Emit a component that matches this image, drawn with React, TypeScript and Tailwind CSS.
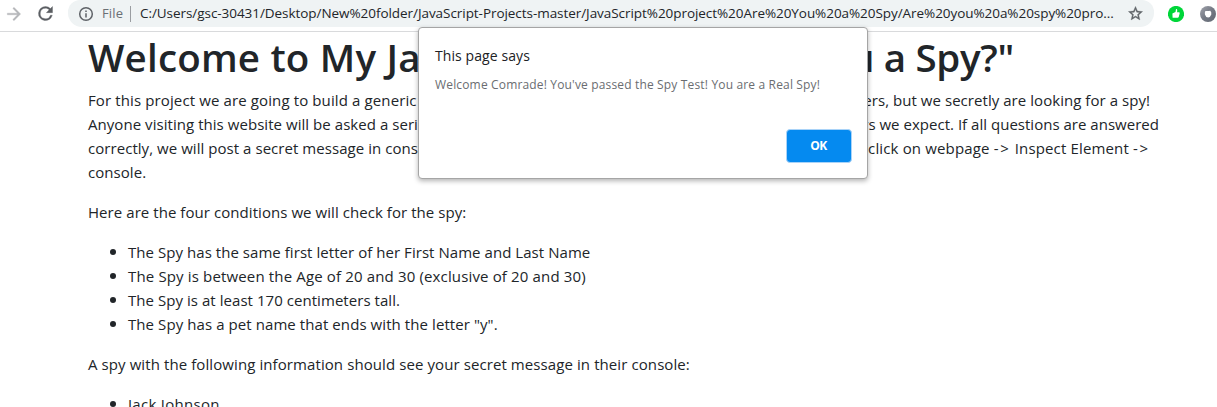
import type { ReactNode } from "react";

function ForwardIcon() {
  return (
    <svg className="h-[20px] w-[20px] shrink-0" viewBox="0 0 24 24" fill="#b5b7ba" stroke="#b5b7ba" strokeWidth="0.4">
      <path d="M12 4l-1.41 1.41L16.17 11H4v2h12.17l-5.58 5.59L12 20l8-8z" />
    </svg>
  );
}

function ReloadIcon() {
  return (
    <svg className="h-[21px] w-[21px] shrink-0" viewBox="0 0 24 24" fill="#5b5e62" stroke="#5b5e62" strokeWidth="0.4">
      <path d="M17.65 6.35A7.96 7.96 0 0 0 12 4a8 8 0 1 0 7.73 10h-2.08A6 6 0 1 1 12 6c1.66 0 3.14.69 4.22 1.78L13 11h7V4z" />
    </svg>
  );
}

function InfoIcon() {
  return (
    <svg className="h-[16px] w-[16px] shrink-0" viewBox="0 0 16 16" fill="none" stroke="#5f6368" strokeWidth="1.5">
      <circle cx="8" cy="8" r="6.3" />
      <path d="M8 7.3v4.2M8 4.5v1.5" />
    </svg>
  );
}

function StarIcon() {
  return (
    <svg className="h-[17px] w-[17px] shrink-0" viewBox="0 0 24 24" fill="#5f6368" stroke="#5f6368" strokeWidth="0.5">
      <path d="M22 9.24l-7.19-.62L12 2 9.19 8.63 2 9.24l5.46 4.73L5.82 21 12 17.27 18.18 21l-1.63-7.03zM12 15.4l-3.76 2.27 1-4.28-3.32-2.88 4.38-.38L12 6.1l1.71 4.04 4.38.38-3.32 2.88 1 4.28z" />
    </svg>
  );
}

function ThumbIcon() {
  return (
    <svg className="h-[16px] w-[16px] shrink-0" viewBox="0 0 16 16">
      <circle cx="8" cy="8" r="8.1" fill="#00d639" />
      <path d="M4.4 7.4 7.5 5.9 8 3.1q1.1-.2 1.2 1L9.1 6.3h1.9q.8.2.7 1l-.9 3.5q-.3.9-1.2.9H4.6z" fill="#fff" />
    </svg>
  );
}

function RingIcon() {
  return (
    <svg className="h-[16px] w-[16px] shrink-0" viewBox="0 0 16 16">
      <defs>
        <linearGradient id="ring" x1="0" y1="0" x2="1" y2="1">
          <stop offset="0" stopColor="#a3a5ad" />
          <stop offset="0.5" stopColor="#747984" />
          <stop offset="1" stopColor="#626873" />
        </linearGradient>
      </defs>
      <circle cx="8" cy="8" r="8" fill="url(#ring)" />
      <path d="M5.4 4.9Q8 5.4 10.2 4.7 11.7 6 11.3 8.4 10.5 10.9 8.2 11.4 5.5 10.9 4.9 8.4 4.5 6.3 5.4 4.9z" fill="#fff" />
    </svg>
  );
}

function Toolbar() {
  return (
    <header className="flex h-8 shrink-0 items-start border-b border-[#d9dadc] bg-white">
      <div className="flex h-[27px] w-[68px] shrink-0 items-center pl-1">
        <ForwardIcon />
        <div className="w-[11px]" />
        <ReloadIcon />
      </div>
      <div className="flex h-[27px] w-[1086px] shrink-0 items-center rounded-b-[14px] rounded-t-[12px] bg-[#eff3f4] pl-[10px] pr-[10px]">
        <InfoIcon />
        <span className="ml-2 w-7 whitespace-nowrap text-[13px] tracking-[0.15px] text-[#6b6f74]">File</span>
        <span className="mr-[9px] h-4 w-px bg-[#9a9da1]" />
        <span className="flex-1 whitespace-nowrap text-[13.5px] tracking-[-0.055px] text-[#222529]">
          C:/Users/gsc-30431/Desktop/New%20folder/JavaScript-Projects-master/JavaScript%20project%20Are%20You%20a%20Spy/Are%20you%20a%20spy%20pro...
        </span>
        <StarIcon />
      </div>
      <div className="flex h-[27px] shrink-0 items-center gap-4 pl-[14px]">
        <ThumbIcon />
        <RingIcon />
      </div>
    </header>
  );
}

function Dialog() {
  return (
    <div
      role="dialog"
      className="absolute left-[418px] top-[27px] flex h-[152px] w-[450px] flex-col rounded-[4px] border border-[#a5a5a5] bg-white px-4 pt-[17px] shadow-[0_2px_5px_rgba(0,0,0,0.3)]"
    >
      <h2 className="h-[22px] whitespace-nowrap text-[14px] leading-[22px] tracking-[0.09px] text-[#202124]">This page says</h2>
      <p className="mt-[8px] h-5 whitespace-nowrap text-[12px] leading-5 tracking-[0.16px] text-[#6a6d71]">
        Welcome Comrade! You've passed the Spy Test! You are a Real Spy!
      </p>
      <button className="ml-auto mr-[-1px] mt-[34px] flex h-[34px] w-[66px] items-center justify-center rounded-[4px] border border-[#a9d3f8] bg-[#058af0] pr-px text-[12px] font-bold tracking-[-0.4px] text-white">
        OK
      </button>
    </div>
  );
}

function Item({ children }: { children: ReactNode }) {
  return (
    <li className="flex items-center gap-3 pl-[22px]">
      <span className="size-1.5 rounded-full bg-[#212529]" />
      {children}
    </li>
  );
}

export default function App() {
  return (
    <div className="relative flex h-[407px] w-[1217px] flex-col overflow-hidden bg-white font-['Open_Sans','Noto_Sans',sans-serif]">
      <Toolbar />
      <main className="flex flex-col whitespace-nowrap pl-[88px] text-[15px] leading-6 tracking-[0.05px] text-[#212529]">
        <h1 className="mt-px flex h-12 w-[926px] justify-between text-[38.5px] font-semibold leading-[48px] tracking-[0.2px]">
          <span>Welcome to My Ja</span>
          <span className="tracking-[-0.3px]">u a Spy?"</span>
        </h1>
        <div className="mt-[7px]">
          <p className="flex w-[1062px] justify-between">
            <span className="tracking-[0.12px]">For this project we are going to build a generic website</span>
            <span>for our users, but we secretly are looking for a spy!</span>
          </p>
          <p className="flex w-[1071px] justify-between">
            <span>Anyone visiting this website will be asked a series of questions</span>
            <span className="tracking-[0.02px]">the answers we expect. If all questions are answered</span>
          </p>
          <p className="flex w-[1062px] justify-between">
            <span>correctly, we will post a secret message in console.</span>
            <span className="tracking-[0.15px]">
              right click on webpage <span className="tracking-[1.8px]">-&gt;</span> Inspect Element{" "}
              <span className="tracking-[1.8px]">-&gt;</span>
            </span>
          </p>
          <p>console.</p>
        </div>
        <p className="mt-4 tracking-[0.06px]">Here are the four conditions we will check for the spy:</p>
        <ul className="mt-4">
          <Item>The Spy has the same first letter of her First Name and Last Name</Item>
          <Item>
            <span className="tracking-[0.15px]">The Spy is between the Age of 20 and 30 (exclusive of 20 and 30)</span>
          </Item>
          <Item>The Spy is at least 170 centimeters tall.</Item>
          <Item>
            <span className="tracking-[0.08px]">The Spy has a pet name that ends with the letter "y".</span>
          </Item>
        </ul>
        <p className="mt-4 tracking-[0.09px]">A spy with the following information should see your secret message in their console:</p>
        <ul className="mt-4">
          <Item>
            <span className="tracking-[0.3px]">Jack Johnson</span>
          </Item>
        </ul>
      </main>
      <Dialog />
    </div>
  );
}
